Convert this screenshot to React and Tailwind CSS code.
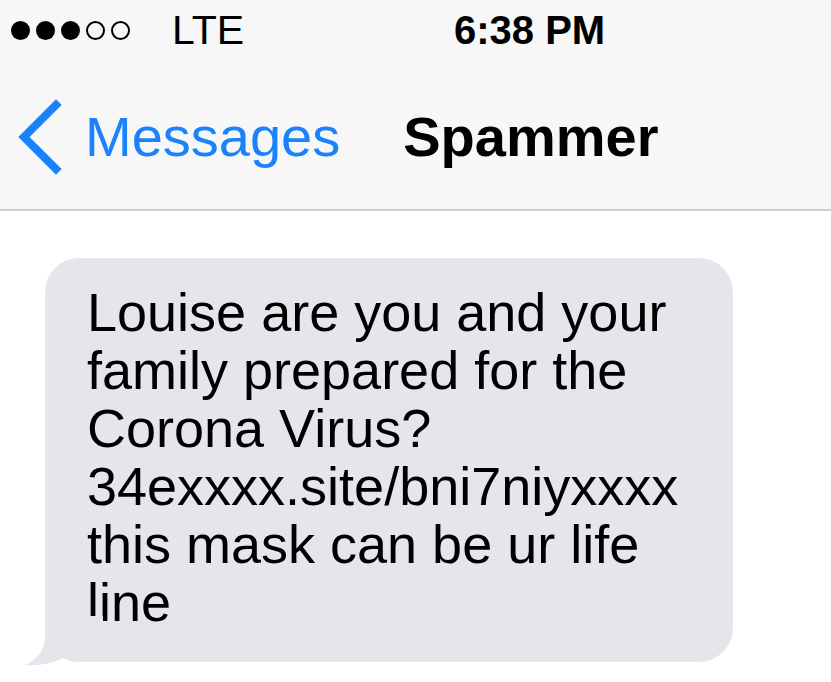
export default function App() {
  return (
    <div className="w-[831px] h-[682px] bg-white overflow-hidden" style={{ fontFamily: '"Liberation Sans", Arial, sans-serif' }}>
      <div className="h-[211px] bg-[#f7f7f7] border-b-2 border-[#cfcfcf] flex flex-col">
        <div className="h-[58px] flex items-center relative pt-[2px]">
          <div className="flex items-center gap-[6px] ml-[11px]">
            <span className="w-[19px] h-[19px] rounded-full bg-black" />
            <span className="w-[19px] h-[19px] rounded-full bg-black" />
            <span className="w-[19px] h-[19px] rounded-full bg-black" />
            <span className="w-[19px] h-[19px] rounded-full border-2 border-black" />
            <span className="w-[19px] h-[19px] rounded-full border-2 border-black" />
          </div>
          <span className="ml-[42px] text-[41px] leading-none text-black">LTE</span>
          <span className="absolute left-[454px] top-[10px] text-[40px] leading-none font-bold text-black">6:38 PM</span>
        </div>
        <div className="flex items-center flex-1 pt-[6px]">
          <svg width="50" height="76" viewBox="0 0 50 76" className="ml-[16px]">
            <path d="M40 6 L8 38 L40 70" fill="none" stroke="#1a82fb" strokeWidth="8" strokeLinecap="square" />
          </svg>
          <span className="ml-[19px] text-[56px] leading-none text-[#1a82fb]">Messages</span>
          <span className="ml-[63px] text-[56px] leading-none font-bold text-black">Spammer</span>
        </div>
      </div>
      <div className="relative ml-[45px] mt-[47px] w-[688px] rounded-[34px] bg-[#e6e5eb] pl-[42px] pr-[20px] pt-[25px] pb-[31px]">
        <p className="text-[54px] leading-[58px] text-black">
          Louise are you and your<br />
          family prepared for the<br />
          Corona Virus?<br />
          34exxxx.site/bni7niyxxxx<br />
          this mask can be ur life<br />
          line
        </p>
        <svg className="absolute left-[-22px] bottom-[-4px]" width="80" height="50" viewBox="0 0 80 50">
          <path d="M22 0 L22 20 C22 34 14 44 2 49 C20 50 34 46 44 40 C52 44 62 46 80 46 L80 0 Z" fill="#e6e5eb" />
        </svg>
      </div>
    </div>
  );
}
